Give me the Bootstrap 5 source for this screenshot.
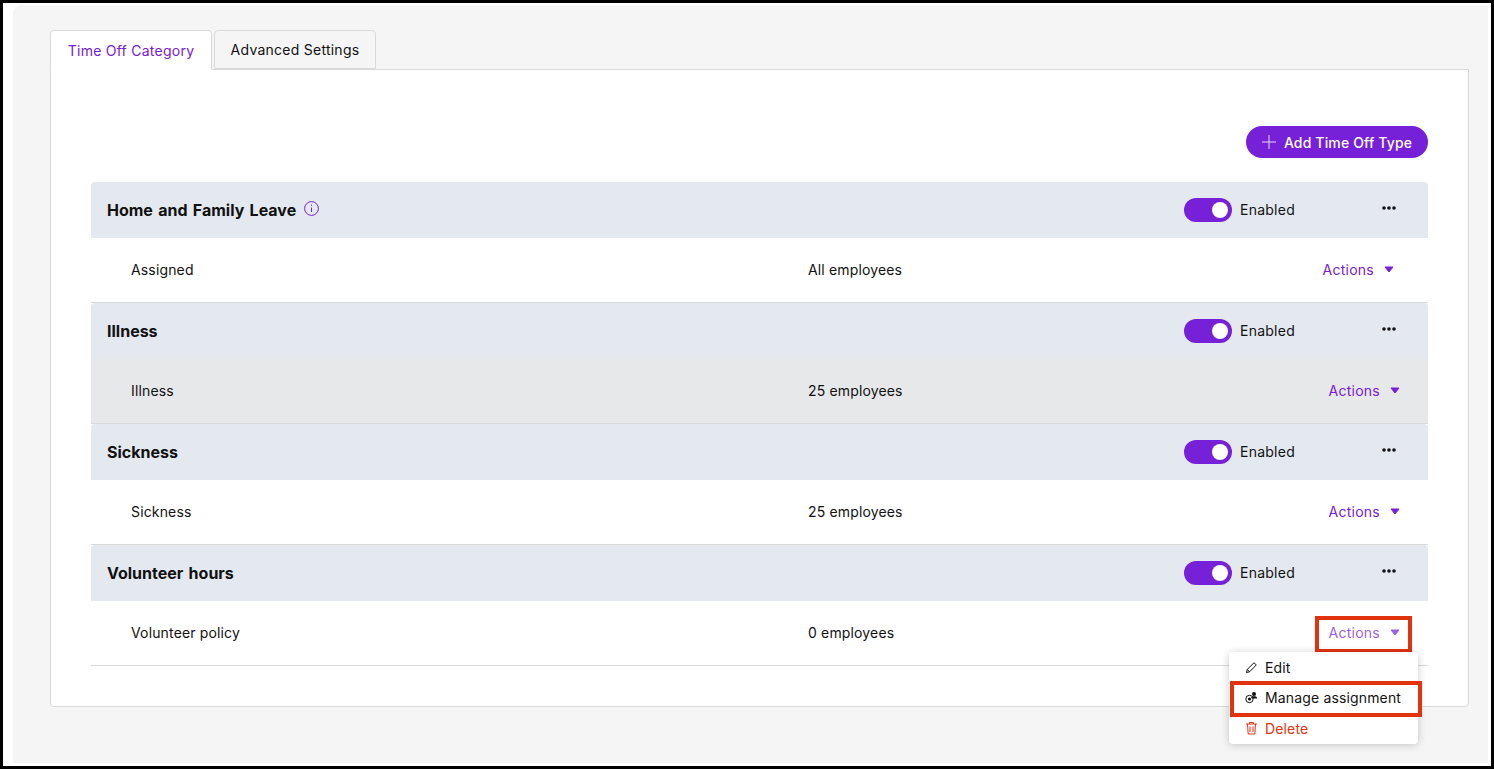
<!DOCTYPE html>
<html lang="en">
<head>
  <meta charset="UTF-8">
  <meta name="viewport" content="width=device-width, initial-scale=1.0">
  <title>Time Off Category</title>
  <link rel="stylesheet" href="https://cdn.jsdelivr.net/npm/bootstrap@5.3.0/dist/css/bootstrap.min.css">
  <style>
    html, body { height: 100%; }
    body { background: #000; font-family: "Inter", "Liberation Sans", sans-serif; font-size: 14px; letter-spacing: .15px; color: #111; overflow: hidden; }
    .shot-frame { height: 769px; border: 3px solid #000; background: #fff; padding: 2px 3px 3px 10px; }
    .shot-inner { height: 100%; background: #f5f5f5; border-radius: 8px 0 0 0; padding: 25px 19px 0 37px; }
    .tab-row { border: 0; gap: 2px; height: 39px; position: relative; z-index: 1; }
    .tab-row .nav-link { height: 39px; width: 162px; padding: 9px 0 0; text-align: center; color: #111; background: #f5f5f5; border: 1px solid #d9d9d9; border-radius: 4px 4px 0 0; margin: 0; line-height: 20px; letter-spacing: .25px; }
    .tab-row .nav-link.active { color: #7620d8; background: #fff; border-color: #d9d9d9 #d9d9d9 #fff; height: 40px; padding-top: 10px; }
    .panel-box { height: 638px; background: #fff; border: 1px solid #d9d9d9; border-radius: 0 0 4px 4px; padding: 56px 40px 0 40px; }
    .add-btn { height: 32px; width: 182px; background: #7620d8; color: #fff; border: 0; border-radius: 16px; padding: 0; font-size: 14px; font-weight: 500; letter-spacing: .15px; }
    .add-btn svg { margin-right: 8px; }
    .btn-row { margin-bottom: 24px; }
    .cat-head { height: 56px; background: #e4e9f0; border-radius: 4px 4px 0 0; padding: 0 16px; }
    .cat-title { font-size: 16px; font-weight: 700; letter-spacing: 0; word-spacing: 1.5px; color: #111; }
    .info-icon { margin-left: 8px; margin-top: -3px; }
    .toggle-pill { width: 48px; height: 24px; border-radius: 12px; background: #7620d8; position: relative; display: inline-block; }
    .toggle-pill::after { content: ""; position: absolute; right: 4px; top: 4px; width: 16px; height: 16px; border-radius: 50%; background: #fff; }
    .state-cell { width: 182px; gap: 8px; letter-spacing: .25px; }
    .state-label { padding-bottom: 2px; }
    .dots-cell { width: 46px; text-align: center; margin-top: -6px; line-height: 1; }
    .policy-row { height: 65px; border-bottom: 1px solid #d9d9d9; background: #fff; padding: 0 0 2px 40px; }
    .policy-row.is-hover { background: #e7e8ea; }
    .policy-name { width: 677px; }
    .actions-link { color: #7620d8; text-decoration: none; gap: 10px; letter-spacing: .25px; }
    .actions-link svg { fill: #7620d8; stroke: #7620d8; }
    .actions-cell { margin-left: auto; padding-right: 28px; }
    .actions-cell.wide-pad { padding-right: 34px; }
    .actions-open .actions-link { color: #9a5fe3; }
    .actions-open .actions-link svg { fill: #9a5fe3; stroke: #9a5fe3; }
    .red-box { position: absolute; border: 4px solid #e0330e; pointer-events: none; }
    .list-wrap { position: relative; }
    .menu-pop { display: block; position: absolute; right: 10px; top: 470px; width: 189px; min-width: 0; padding: 0; border: 0; border-radius: 4px; box-shadow: 0 1px 8px rgba(0,0,0,.2); background: #fff; z-index: 5; font-size: 14px; }
    .menu-pop .dropdown-item { height: 31px; padding: 0 16px; display: flex; align-items: center; gap: 7px; color: #111; }
    .menu-pop .dropdown-item.item-mid { padding-bottom: 2px; }
    .menu-pop .dropdown-item svg { flex-shrink: 0; }
    .menu-pop .dropdown-item.text-del { color: #e0330e; height: 30px; padding-bottom: 2px; }
    .box-action { right: 16px; top: 434px; width: 97px; height: 37px; }
    .box-menu { right: 6px; top: 499px; width: 192px; height: 36px; z-index: 6; }
  </style>
</head>
<body>
  <div class="shot-frame">
    <div class="shot-inner">
      <ul class="nav tab-row">
        <li class="nav-item"><a class="nav-link active" href="#">Time Off Category</a></li>
        <li class="nav-item"><a class="nav-link" href="#">Advanced Settings</a></li>
      </ul>
      <div class="panel-box">
        <div class="d-flex justify-content-end btn-row">
          <button class="btn add-btn d-inline-flex align-items-center justify-content-center">
            <svg width="14" height="14" viewBox="0 0 14 14" fill="none" stroke="#e6d6f8" stroke-width="1"><path d="M7 0v14M0 7h14"/></svg>
            Add Time Off Type
          </button>
        </div>
        <div class="list-wrap">
          <div class="cat-head d-flex align-items-center">
            <span class="cat-title">Home and Family Leave</span>
            <svg class="info-icon" width="15" height="15" viewBox="0 0 15 15" fill="none" stroke="#7620d8"><circle cx="7.5" cy="7.5" r="6.9"/><path d="M7.5 6.5v4.5M7.5 3.6v1.2"/></svg>
            <div class="ms-auto d-flex align-items-center state-cell"><span class="toggle-pill"></span><span class="state-label">Enabled</span></div>
            <div class="dots-cell"><svg width="14" height="4" viewBox="0 0 14 4" fill="#111"><circle cx="2" cy="2" r="1.8"/><circle cx="7" cy="2" r="1.8"/><circle cx="12" cy="2" r="1.8"/></svg></div>
          </div>
          <div class="policy-row d-flex align-items-center">
            <span class="policy-name">Assigned</span><span>All employees</span>
            <div class="actions-cell wide-pad"><a class="actions-link d-flex align-items-center" href="#">Actions <svg width="10" height="7" viewBox="0 0 10 7" stroke-linejoin="round"><path d="M1 1h8L5 6z"/></svg></a></div>
          </div>

          <div class="cat-head d-flex align-items-center">
            <span class="cat-title">Illness</span>
            <div class="ms-auto d-flex align-items-center state-cell"><span class="toggle-pill"></span><span class="state-label">Enabled</span></div>
            <div class="dots-cell"><svg width="14" height="4" viewBox="0 0 14 4" fill="#111"><circle cx="2" cy="2" r="1.8"/><circle cx="7" cy="2" r="1.8"/><circle cx="12" cy="2" r="1.8"/></svg></div>
          </div>
          <div class="policy-row is-hover d-flex align-items-center">
            <span class="policy-name">Illness</span><span>25 employees</span>
            <div class="actions-cell"><a class="actions-link d-flex align-items-center" href="#">Actions <svg width="10" height="7" viewBox="0 0 10 7" stroke-linejoin="round"><path d="M1 1h8L5 6z"/></svg></a></div>
          </div>

          <div class="cat-head d-flex align-items-center">
            <span class="cat-title">Sickness</span>
            <div class="ms-auto d-flex align-items-center state-cell"><span class="toggle-pill"></span><span class="state-label">Enabled</span></div>
            <div class="dots-cell"><svg width="14" height="4" viewBox="0 0 14 4" fill="#111"><circle cx="2" cy="2" r="1.8"/><circle cx="7" cy="2" r="1.8"/><circle cx="12" cy="2" r="1.8"/></svg></div>
          </div>
          <div class="policy-row d-flex align-items-center">
            <span class="policy-name">Sickness</span><span>25 employees</span>
            <div class="actions-cell"><a class="actions-link d-flex align-items-center" href="#">Actions <svg width="10" height="7" viewBox="0 0 10 7" stroke-linejoin="round"><path d="M1 1h8L5 6z"/></svg></a></div>
          </div>

          <div class="cat-head d-flex align-items-center">
            <span class="cat-title">Volunteer hours</span>
            <div class="ms-auto d-flex align-items-center state-cell"><span class="toggle-pill"></span><span class="state-label">Enabled</span></div>
            <div class="dots-cell"><svg width="14" height="4" viewBox="0 0 14 4" fill="#111"><circle cx="2" cy="2" r="1.8"/><circle cx="7" cy="2" r="1.8"/><circle cx="12" cy="2" r="1.8"/></svg></div>
          </div>
          <div class="policy-row d-flex align-items-center">
            <span class="policy-name">Volunteer policy</span><span>0 employees</span>
            <div class="actions-cell actions-open"><a class="actions-link d-flex align-items-center" href="#">Actions <svg width="10" height="7" viewBox="0 0 10 7" stroke-linejoin="round"><path d="M1 1h8L5 6z"/></svg></a></div>
          </div>

          <div class="red-box box-action"></div>
          <ul class="dropdown-menu menu-pop">
            <li><a class="dropdown-item" href="#">
              <svg width="13" height="13" viewBox="0 0 13 13" fill="none" stroke="#111"><path d="M1.5 11.5l.7-3L9 1.7l2.3 2.3-6.8 6.8zM2.2 8.5l2.3 2.3"/></svg>Edit</a></li>
            <li><a class="dropdown-item item-mid" href="#">
              <svg width="13" height="13" viewBox="0 0 13 13"><circle cx="4.5" cy="8" r="3.7" fill="none" stroke="#111"/><circle cx="4.5" cy="8" r="1.6" fill="#111"/><circle cx="9" cy="3" r="2" fill="#111"/><path d="M6 6.5c.5-1 1.5-1.3 3-1.3s3 .4 3 1.8v.5H7z" fill="#111"/></svg>Manage assignment</a></li>
            <li><a class="dropdown-item text-del" href="#">
              <svg width="13" height="14" viewBox="0 0 13 14" fill="none" stroke="#e0330e"><path d="M1 3h11M4.5 3V1.5h4V3M2.5 3l.7 10h6.6l.7-10M5 5.5v5.5M8 5.5v5.5"/></svg>Delete</a></li>
          </ul>
          <div class="red-box box-menu"></div>
        </div>
      </div>
    </div>
  </div>
  <script src="https://cdn.jsdelivr.net/npm/bootstrap@5.3.0/dist/js/bootstrap.bundle.min.js"></script>
</body>
</html>
